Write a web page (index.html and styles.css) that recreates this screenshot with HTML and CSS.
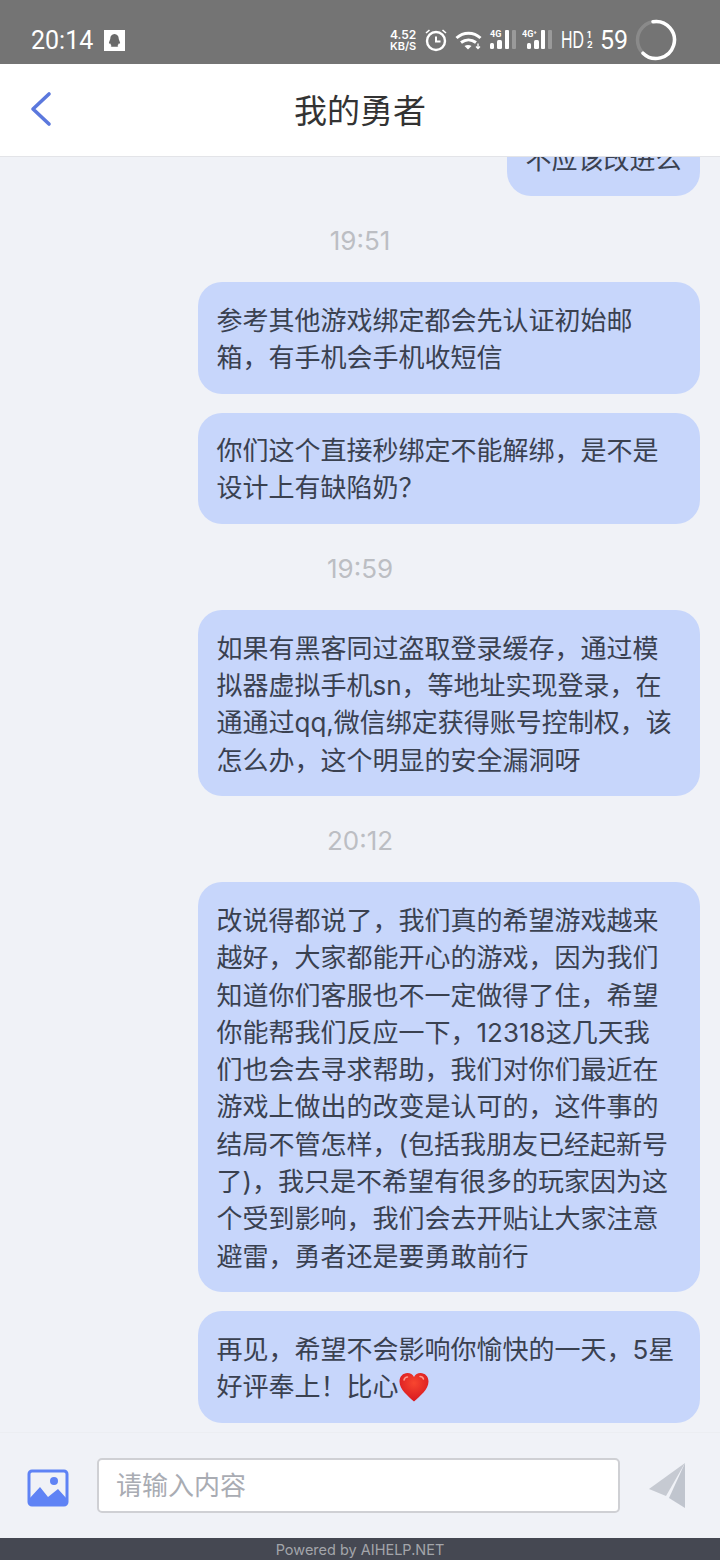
FILE: index.html
```html
<!DOCTYPE html>
<html lang="zh-CN">

<head>
    <meta charset="UTF-8">
    <meta name="viewport" content="width=device-width, initial-scale=1.0">
    <title>我的勇者</title>
    <link rel="stylesheet" href="styles.css">
</head>

<body>
    <div class="app">
        <div class="status-bar">
            <span class="clock">20:14</span>
            <svg class="qq" width="21" height="21" viewBox="0 0 21 21">
                <rect width="21" height="21" fill="#fff" />
                <path d="M10.5 4c-2.800 0-4.200 2.200-4.200 4.600 0 1-.8 2.400-1.300 3.900-.3 1.100.2 1.500 1.100.8.300.9.8 1.500 1.400 2-.9.4-1.200 1.500.5 1.500h5c1.700 0 1.400-1.100.5-1.500.6-.5 1.100-1.100 1.400-2 .9.7 1.400.3 1.100-.8-.5-1.500-1.300-2.900-1.300-3.900C14.700 6.200 13.300 4 10.500 4z" fill="#6a6a6a" />
            </svg>
            <span class="spacer"></span>
            <span class="speed">4.52<br><small>KB/S</small></span>
            <svg class="alarm" width="24" height="24" viewBox="0 0 24 24" fill="none" stroke="#fff">
                <circle cx="12" cy="13" r="9" stroke-width="2.400" />
                <path d="M12 8.500v5h4.500" stroke-width="2" />
                <path d="M2 5l3.500-3M22 5l-3.500-3" stroke-width="1.600" />
            </svg>
            <svg class="wifi" width="27" height="20" viewBox="0 0 27 20" fill="none" stroke="#fff" stroke-width="3">
                <path d="M1.500 8c7-6.500 17-6.500 24 0" />
                <path d="M6 12.500c4.500-3.500 10.500-3.500 15 0" />
                <path d="M9.500 16l3.500 3.500 3.500-3.500c-2-1.500-5-1.500-7 0z" fill="#fff" stroke="none" />
                <path d="M23 13.500v5M21 16.500l2 2 2-2" stroke-width="1.300" />
            </svg>
            <svg class="signal first" width="27" height="22" viewBox="0 0 27 22" fill="#fff">
                <text x="1" y="8" class="net">4G</text>
                <rect x="1" y="14" width="4" height="6" rx="1.500" />
                <rect x="8" y="11" width="5" height="9" rx="1.500" />
                <rect x="16" y="1" width="4" height="19" rx="1" />
                <rect x="23" y="1" width="4" height="19" rx="1" fill="#9a9a9a" />
            </svg>
            <svg class="signal" width="31" height="22" viewBox="0 0 31 22" fill="#fff">
                <text x="0" y="8" class="net">4G⁺</text>
                <rect x="5" y="14" width="4" height="6" rx="1.500" />
                <rect x="12" y="11" width="5" height="9" rx="1.500" />
                <rect x="19" y="1" width="4" height="19" rx="1" />
                <rect x="26" y="1" width="4" height="19" rx="1" fill="#9a9a9a" />
            </svg>
            <span class="hd"><span class="hd-text">HD</span><span class="hd-sim">1<br>2</span></span>
            <span class="battery">59</span>
            <svg class="ring" width="42" height="42" viewBox="0 0 42 42" fill="none" stroke-width="3.500">
                <circle cx="21" cy="21" r="18.500" stroke="#8a8a8a" />
                <path d="M18 2.700a18.500 18.500 0 1 1-10 31.500" stroke="#fff" stroke-linecap="round" />
            </svg>
        </div>

        <div class="nav-bar">
            <svg class="back" width="22" height="36" viewBox="0 0 22 36" fill="none" stroke="#5b78dd" stroke-width="3.600" stroke-linecap="round" stroke-linejoin="round">
                <path d="M19 3L3 18l16 15" />
            </svg>
            <h1 class="title">我的勇者</h1>
        </div>

        <div class="messages">
            <div class="msg short">不应该改进么</div>
            <div class="time">19:51</div>
            <div class="msg">参考其他游戏绑定都会先认证初始邮箱，有手机会手机收短信</div>
            <div class="msg">你们这个直接秒绑定不能解绑，是不是设计上有缺陷奶？</div>
            <div class="time">19:59</div>
            <div class="msg">如果有黑客同过盗取登录缓存，通过模拟器虚拟手机sn，等地址实现登录，在通通过qq,微信绑定获得账号控制权，该怎么办，这个明显的安全漏洞呀</div>
            <div class="time">20:12</div>
            <div class="msg">改说得都说了，我们真的希望游戏越来越好，大家都能开心的游戏，因为我们知道你们客服也不一定做得了住，希望你能帮我们反应一下，12318这几天我们也会去寻求帮助，我们对你们最近在游戏上做出的改变是认可的，这件事的结局不管怎样，(包括我朋友已经起新号了)，我只是不希望有很多的玩家因为这个受到影响，我们会去开贴让大家注意避雷，勇者还是要勇敢前行</div>
            <div class="msg">再见，希望不会影响你愉快的一天，5星好评奉上！比心<svg class="heart" width="30" height="30" viewBox="0 0 30 30">
                    <defs>
                        <radialGradient id="heartFill" cx="50%" cy="35%" r="70%">
                            <stop offset="0" stop-color="#f8462f" />
                            <stop offset="1" stop-color="#d5151f" />
                        </radialGradient>
                    </defs>
                    <path d="M15 29.500C9 24 .5 17.500.5 9.500.5 4.500 4 1 8.500 1c3 0 5.200 1.500 6.500 4 1.300-2.500 3.500-4 6.500-4 4.500 0 8 3.500 8 8.500 0 8-8.500 14.500-14.500 20z" fill="url(#heartFill)" />
                    <path d="M5 8c.5-2 1.800-3 3.500-3M21 4.500c1.500 0 3 .8 3.500 2.500" stroke="#ff9a8c" stroke-width="1.500" fill="none" stroke-linecap="round" />
                </svg></div>
        </div>

        <div class="input-bar">
            <svg class="pic" width="42" height="38" viewBox="0 0 42 38">
                <rect x="2" y="2" width="38" height="34" rx="3" fill="none" stroke="#5f83f5" stroke-width="3" />
                <circle cx="27" cy="12" r="4" fill="#5f83f5" />
                <path d="M2 30l11-12 8 10 10-8 9 10v3a3 3 0 0 1-3 3H5a3 3 0 0 1-3-3z" fill="#5f83f5" />
            </svg>
            <div class="input">请输入内容</div>
            <svg class="send" width="38" height="46" viewBox="0 0 38 46">
                <path d="M37 0L1 26l17 7z" fill="#c6cad2" />
                <path d="M37 0L21 35l16 10z" fill="#c0c5ce" />
            </svg>
        </div>

        <div class="footer">Powered by AIHELP.NET</div>
    </div>
</body>

</html>
```

FILE: styles.css
```css
* {
    box-sizing: border-box;
}

body {
    margin: 0;
    font-family: Inter, "Noto Sans CJK SC", sans-serif;
}

.app {
    width: 720px;
    height: 1560px;
    display: flex;
    flex-direction: column;
    background: #f0f2f7;
}

/* status bar */
.status-bar {
    height: 64px;
    flex-shrink: 0;
    display: flex;
    align-items: center;
    padding: 16px 43px 0 31px;
    background: #747474;
    color: #fff;
}

.clock {
    font-family: Roboto, sans-serif;
    font-size: 25px;
    line-height: 1;
    margin-right: 11px;
}

.spacer {
    flex: 1;
}

.speed {
    width: 26px;
    font-size: 12px;
    font-weight: 600;
    line-height: 11px;
    text-align: center;
    white-space: nowrap;
    margin-right: 8px;
}

.speed small {
    font-size: 11px;
}

.alarm {
    margin-right: 7px;
}

.wifi {
    margin-right: 7px;
}

.signal {
    margin-right: 7px;
}

.signal.first {
    margin-right: 6px;
}

.net {
    font-size: 9px;
    font-weight: 700;
    font-family: Roboto, sans-serif;
}

.hd {
    width: 31px;
    display: flex;
    align-items: center;
    margin-left: 1px;
    margin-right: 8px;
}

.hd-text {
    width: 26px;
    font-family: "Liberation Sans", sans-serif;
    font-size: 24px;
    line-height: 1;
    transform: scaleX(.66);
    transform-origin: left center;
}

.hd-sim {
    font-size: 9px;
    line-height: 10px;
    font-weight: 700;
}

.battery {
    font-family: Roboto, sans-serif;
    font-size: 25px;
    line-height: 1;
    margin-right: 7px;
}

/* title */
.nav-bar {
    height: 93px;
    flex-shrink: 0;
    position: relative;
    display: flex;
    align-items: center;
    justify-content: center;
    padding-bottom: 2px;
    background: #fff;
    border-bottom: 1px solid #e3e4e8;
}

.back {
    position: absolute;
    left: 30px;
    top: 27px;
}

.title {
    margin: 0;
    font-size: 33px;
    font-weight: 400;
    color: #333;
}

/* chat list */
.messages {
    flex: 1;
    min-height: 0;
    overflow: hidden;
    display: flex;
    flex-direction: column;
    justify-content: flex-end;
    align-items: flex-end;
    gap: 19px;
    padding-bottom: 9px;
}

.msg {
    width: 502px;
    flex-shrink: 0;
    margin-right: 20px;
    padding: 19.5px 25px 17.5px 18.5px;
    font-size: 26px;
    line-height: 37.3px;
    color: #3a4150;
    background: #c7d6fb;
    border-radius: 24px;
}

.msg.short {
    width: auto;
    padding-right: 18.5px;
}

.time {
    align-self: center;
    flex-shrink: 0;
    margin: 7px 0 3px;
    font-size: 26px;
    line-height: 38px;
    color: #bcbec3;
}

.heart {
    vertical-align: -6px;
}

/* bottom input */
.input-bar {
    height: 106px;
    flex-shrink: 0;
    display: flex;
    align-items: center;
    padding: 0 34px 0 27px;
    border-top: 1px solid #eceef2;
}

.pic {
    margin-top: 4px;
}

.input {
    width: 523px;
    height: 55px;
    margin: 0 28px;
    padding-left: 17px;
    font-size: 26px;
    line-height: 51px;
    color: #a9acb3;
    background: #fff;
    border: 2px solid #cfd0d4;
    border-radius: 5px;
}

.send {
    flex-shrink: 0;
}

.footer {
    height: 22px;
    flex-shrink: 0;
    font-size: 14.5px;
    line-height: 23px;
    text-align: center;
    color: #a3a5aa;
    background: #454852;
}
```
